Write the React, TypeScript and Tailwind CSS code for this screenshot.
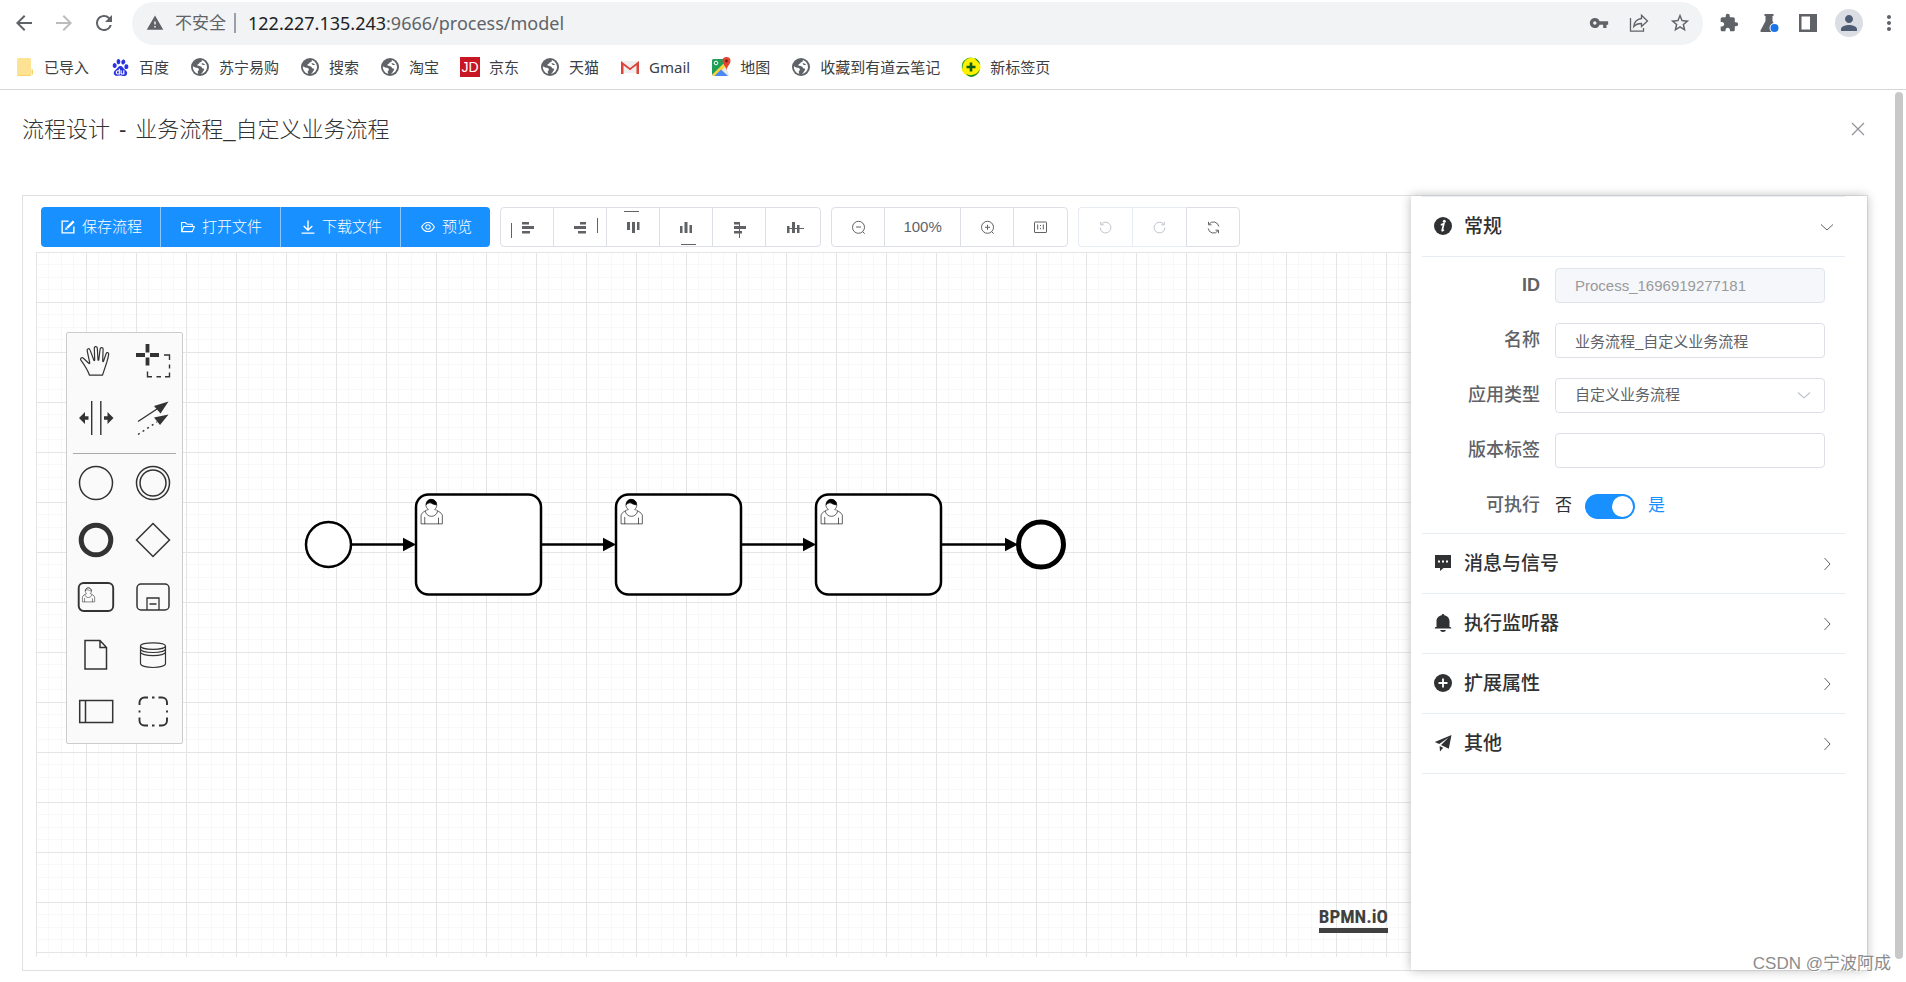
import React from 'react';
import {
  MdArrowBack,
  MdArrowForward,
  MdExtension,
  MdMoreVert,
  MdPerson,
  MdRefresh,
  MdStarBorder,
  MdVpnKey,
  MdWarning,
} from 'react-icons/md';
import { SiBaidu } from 'react-icons/si';
import { AiOutlineEye, AiOutlineFolderOpen } from 'react-icons/ai';

/* ---------- Browser chrome ---------- */

const Globe = () => (
  <svg viewBox="0 0 18 18" className="size-[18px]">
    <circle cx="9" cy="9" r="9" fill="#5f6368" />
    <path
      d="M10.8 1.9c.3 1.3-.2 2-1.6 2.300-.9.2-.7 1.300-1.500 1.600-1 .3-1.500.9-1.200 1.700.4.900 3.500.2 4.100 1.700.3.900 1 1.200 1.900 1.200.8 0 .9 1.500 0 2.300-.8.700-1.100 2.600-2.700 3.300 3.200-.5 6.200-3.400 6.200-7 0-3.200-2.100-6.100-5.200-7.100z"
      fill="#fff"
    />
    <path
      d="M1.900 8.200c1.300.5 2.600 1.500 4 1.600 1.300.2 2.100.9 2 1.900-.1 1-1.200 1-1.200 2 0 .8.600 1.100.500 2.100-3-.6-5.500-3.500-5.300-7.600z"
      fill="#fff"
    />
    <path d="M10.500 5.400c1.300-.3 2.500.2 3.500 1.400-1.300.5-2.800.2-3.500-1.400z" fill="#5f6368" />
  </svg>
);

const Folder = () => (
  <svg viewBox="0 0 20 20" className="size-5">
    <rect x="2" y="1" width="14" height="18" rx="1.500" fill="#fde293" />
    <path d="M3.500 19h11a1.500 1.500 0 0 0 1.500-1.500h2V13l-1.500-1.500V17a1 1 0 0 1-1 1H2.500z" fill="#f6d365" />
  </svg>
);

const JdLogo = () => (
  <span className="flex size-5 items-center justify-center bg-[#c81623] text-[14px] leading-5 text-white">
    JD
  </span>
);

const GmailLogo = () => (
  <svg viewBox="0 0 20 20" className="size-5">
    <path d="M1 4h18v12H1z" fill="#efefef" />
    <path d="M1 17V4l9 7 9-7v13h-2.500V8.200L10 13.300 3.500 8.200V17z" fill="#db4437" />
  </svg>
);

const MapsLogo = () => (
  <svg viewBox="0 0 20 20" className="size-5">
    <path d="M1 3.500A1.500 1.500 0 0 1 2.500 2H13l5 16.500-1 .5H2.500A1.500 1.500 0 0 1 1 17.500z" fill="#e8e8e8" />
    <path d="M1 3.500A1.500 1.500 0 0 1 2.500 2H12l1 5L1 18z" fill="#1e9e57" />
    <path d="M1 18 13 6l2 3L5 19H2z" fill="#fbd23b" />
    <path d="M3.500 19 10 12.500 17 19z" fill="#4a89f3" />
    <circle cx="5" cy="6" r="1.800" fill="none" stroke="#fff" />
    <path d="M15.500 0A4 4 0 0 0 11.500 4c0 3 3 4.500 4 9 1-4.500 4-6 4-9a4 4 0 0 0-4-4z" fill="#e14335" />
    <circle cx="15.500" cy="4" r="1.400" fill="#7a1c14" />
  </svg>
);

const SafeLogo = () => (
  <svg viewBox="0 0 20 20" className="size-5">
    <circle cx="10" cy="10" r="9.600" fill="#fff000" />
    <path d="M3 14A9 9 0 0 1 13 1 9.800 9.800 0 0 0 1 7a9.500 9.500 0 0 0 2 7z" fill="#2faa3a" />
    <path d="M5 17c5 2.500 11 1 14-5a9.800 9.800 0 0 1-9 8 9 9 0 0 1-5-3z" fill="#128a2a" />
    <path d="M13 .8A9.800 9.800 0 0 1 19.500 8L18 6z" fill="#128a2a" />
    <path d="M10 5.500v9M5.500 10h9" stroke="#0b5d12" strokeWidth="2.600" />
  </svg>
);

const bookmarks: { label: string; icon: React.ReactNode }[] = [
  { label: '已导入', icon: <Folder /> },
  { label: '百度', icon: <SiBaidu className="size-[17px] text-[#2932e1]" /> },
  { label: '苏宁易购', icon: <Globe /> },
  { label: '搜索', icon: <Globe /> },
  { label: '淘宝', icon: <Globe /> },
  { label: '京东', icon: <JdLogo /> },
  { label: '天猫', icon: <Globe /> },
  { label: 'Gmail', icon: <GmailLogo /> },
  { label: '地图', icon: <MapsLogo /> },
  { label: '收藏到有道云笔记', icon: <Globe /> },
  { label: '新标签页', icon: <SafeLogo /> },
];

function BrowserBar() {
  return (
    <header className="border-b border-[#d5d6d8] bg-white font-['Noto_Sans','Noto_Sans_CJK_SC',sans-serif] text-[#5f6368]">
      <div className="flex items-center pt-0.5 pr-[5px] pl-3">
        <nav className="flex items-center gap-4 pb-0.5" aria-label="导航">
          <button aria-label="后退"><MdArrowBack className="size-6" /></button>
          <button aria-label="前进" className="text-[#babcbe]"><MdArrowForward className="size-6" /></button>
          <button aria-label="刷新"><MdRefresh className="size-6" /></button>
        </nav>
        <div className="ml-4 flex h-[43px] flex-1 items-center rounded-full bg-[#f1f3f4] px-3 pb-0.5 pl-3.5">
          <MdWarning className="size-[18px]" />
          <span className="ml-[11px] text-[17px] leading-6">不安全</span>
          <span className="mr-3 ml-2 h-5 w-0.5 bg-[#9aa0a6]" />
          <span className="flex-1 text-[18px] leading-6">
            <span className="text-[#202124]">122.227.135.243</span>:9666/process/model
          </span>
          <div className="flex items-center gap-5">
            <button aria-label="密码"><MdVpnKey className="size-5" /></button>
            <button aria-label="分享">
              <svg viewBox="0 0 20 20" className="size-5" fill="none" stroke="currentColor" strokeWidth="1.300">
                <path d="M1.500 5v13.200h13V15" />
                <path d="M12.500 2.200 18.500 8l-6 5.500V10.500c-3.500 0-6 1-7.800 3.200.4-4 2.800-7.600 7.800-8.200z" />
              </svg>
            </button>
            <button aria-label="收藏"><MdStarBorder className="size-[22px]" /></button>
          </div>
        </div>
        <div className="ml-4 flex items-center gap-5 pb-0.5">
          <button aria-label="扩展程序"><MdExtension className="size-5" /></button>
          <button aria-label="实验">
            <svg viewBox="0 0 20 20" className="size-5">
              <path d="M5.500 1h9v2h-1v5l5 9.500c.4.900-.2 1.500-1 1.500H2.500c-.9 0-1.400-.8-1-1.600L6.500 8V3h-1z" fill="#5f6368" />
              <circle cx="15.500" cy="15" r="5" fill="#fff" />
              <circle cx="15.500" cy="15" r="4" fill="#1a73e8" />
            </svg>
          </button>
          <button aria-label="侧边栏">
            <svg viewBox="0 0 18 18" className="size-[18px]">
              <path d="M0 0h18v18H0zM2.500 2.500v13H11v-13z" fill="#5f6368" fillRule="evenodd" />
            </svg>
          </button>
          <button aria-label="个人资料" className="-ml-0.5 flex size-7 items-center justify-center rounded-full bg-[#dadde3]">
            <MdPerson className="size-6 text-[#4d5b73]" />
          </button>
        </div>
        <button aria-label="更多" className="ml-3.5 pb-0.5"><MdMoreVert className="size-6" /></button>
      </div>
      <nav className="flex h-11 items-center gap-[21px] pl-[15px] text-[#3c4043]" aria-label="书签">
        {bookmarks.map((b) => (
          <a key={b.label} href="#" className="flex items-center gap-[9px] text-[15px] leading-5">
            <span className="flex size-5 items-center justify-center font-['Liberation_Sans',sans-serif]">{b.icon}</span>
            {b.label}
          </a>
        ))}
      </nav>
    </header>
  );
}

/* ---------- Toolbar ---------- */

const primaryActions: { label: string; icon: React.ReactNode }[] = [
  {
    label: '保存流程',
    icon: (
      <svg viewBox="0 0 15 15" className="size-4" fill="none" stroke="currentColor" strokeWidth="1.300">
        <path d="M8 2H2v11h11V7" />
        <path d="m12.800 2.200-6 6" strokeWidth="2.200" />
        <path d="m5.500 7.500-.8 2.800 2.800-.8z" fill="currentColor" stroke="none" />
      </svg>
    ),
  },
  { label: '打开文件', icon: <AiOutlineFolderOpen className="size-4" /> },
  {
    label: '下载文件',
    icon: (
      <svg viewBox="0 0 15 15" className="size-4" fill="none" stroke="currentColor" strokeWidth="1.300">
        <path d="M7.500 1.500v8.500M3.500 6.500l4 4 4-4M1.500 13.200h12" />
      </svg>
    ),
  },
  { label: '预览', icon: <AiOutlineEye className="size-4" /> },
];

const alignIcons: { label: string; shape: string }[] = [
  { label: '向左对齐', shape: 'M21 14h7v2.500h-7zM21 18h12v3h-12zM21 23h8v2.500h-8zM10 15h1v15h-1z' },
  { label: '向右对齐', shape: 'M26 14h6v2.500h-6zM20 18h12v3h-12zM24 23h8v2.500h-8zM43 10h1v15h-1z' },
  { label: '向上对齐', shape: 'M20 14h3v8h-3zM25 14h3v11h-3zM30 14h2.500v8h-2.500zM17 3h15v1h-15z' },
  { label: '向下对齐', shape: 'M20 18h2.500v7h-2.500zM24.500 14h3v11h-3zM29.500 17h2.500v8h-2.500zM21 36h15v1h-15z' },
  { label: '水平居中', shape: 'M21 14h6v2.500h-6zM21 18h12v3h-12zM21 23h8v2.500h-8zM26 15h1v15h-1z' },
  { label: '垂直居中', shape: 'M20 18h2.500v7h-2.500zM25 14h3v11h-3zM30 17h2.500v8h-2.500zM22 20h15v1h-15z' },
];

const lineIcon = 'size-[15px] fill-none stroke-current';

function Toolbar() {
  const cell =
    'flex w-[53px] items-center justify-center border-r border-[#dcdfe6] last:w-[54px] last:border-r-0';
  return (
    <div className="ml-[5px] flex h-10 gap-2.5 text-[15px] text-[#606266]">
      <div className="flex overflow-hidden rounded-[4px] bg-[#1890ff] text-white">
        {primaryActions.map((a) => (
          <button
            key={a.label}
            className="flex items-center gap-1.5 border-r border-[#8cc8ff] pr-[18px] pl-[19px] font-light last:border-r-0"
          >
            {a.icon}
            <span>{a.label}</span>
          </button>
        ))}
      </div>
      <div className="flex rounded-[4px] border border-[#dcdfe6]">
        {alignIcons.map((a) => (
          <button key={a.label} aria-label={a.label} className={cell}>
            <svg viewBox="0 0 52 38" className="h-[38px] w-[52px] shrink-0" fill="currentColor">
              <path d={a.shape} />
            </svg>
          </button>
        ))}
      </div>
      <div className="flex rounded-[4px] border border-[#dcdfe6]">
        <button aria-label="缩小视图" className={cell}>
          <svg viewBox="0 0 15 15" className={lineIcon}>
            <circle cx="7.500" cy="7.300" r="6" />
            <path d="M5 7h5M11.700 11.700l2 2" />
          </svg>
        </button>
        <button className="flex w-[76px] items-center justify-center border-r border-[#dcdfe6]">100%</button>
        <button aria-label="放大视图" className={cell}>
          <svg viewBox="0 0 15 15" className={lineIcon}>
            <circle cx="7.500" cy="7.300" r="6" />
            <path d="M5 7.300h5M7.500 4.800v5M11.700 11.700l2 2" />
          </svg>
        </button>
        <button aria-label="重置视图" className="flex w-[53px] items-center justify-center">
          <svg viewBox="0 0 15 15" className={lineIcon}>
            <rect x="1.500" y="2" width="12" height="10.500" rx=".5" />
            <path d="M4.700 4.500v5M10.300 4.500v5M7.500 5v1.200M7.500 8v1.200" />
          </svg>
        </button>
      </div>
      <div className="flex">
        <button
          aria-label="撤销"
          disabled
          className="flex w-[54px] items-center justify-center rounded-l-[4px] border border-r-0 border-[#e6ebf5] text-[#c0c4cc]"
        >
          <svg viewBox="0 0 15 15" className={lineIcon}>
            <path d="M3.200 4.300A5.400 5.400 0 1 1 2.100 7.600M2.700 1.800v3h3" />
          </svg>
        </button>
        <button
          aria-label="恢复"
          disabled
          className="flex w-[54px] items-center justify-center border border-r-0 border-[#e6ebf5] text-[#c0c4cc]"
        >
          <svg viewBox="0 0 15 15" className={lineIcon}>
            <path d="M11.800 4.300A5.400 5.400 0 1 0 12.900 7.600M12.300 1.800v3h-3" />
          </svg>
        </button>
        <button
          aria-label="重新绘制"
          className="flex w-[54px] items-center justify-center rounded-r-[4px] border border-[#dcdfe6]"
        >
          <svg viewBox="0 0 15 15" className={lineIcon}>
            <path d="M3 4.300a5.400 5.400 0 0 1 9.800 2.200M12 10.700A5.400 5.400 0 0 1 2.200 8.500" />
            <path d="M2.500 1.800v3h3M12.500 13.200v-3h-3" />
          </svg>
        </button>
      </div>
    </div>
  );
}

/* ---------- Palette ---------- */

const person =
  'm15,12 c 0.909,-0.845 1.594,-2.049 1.594,-3.385 0,-2.554 -1.805,-4.622 -4.357,-4.622 -2.552,0 -4.288,2.068 -4.288,4.622 0,1.348 0.974,2.562 1.896,3.405 -0.529,0.187 -5.669,2.097 -5.794,4.756 v 6.718 h 17 v -6.718 c 0,-2.298 -5.528,-4.595 -6.051,-4.776 zm -8,6 l 0,5.5 m 11,0 l 0,-5';
const collar = 'm15,12 m 2.162,1.009 c 0,2.447 -2.158,4.431 -4.821,4.431 -2.665,0 -4.822,-1.981 -4.822,-4.431';
const hair =
  'm15,12 m -6.9,-3.80 c 0,0 2.251,-2.358 4.274,-1.177 2.024,1.181 4.221,1.537 4.124,0.965 -0.098,-0.57 -0.117,-3.791 -4.191,-4.136 -3.572,-0.348 -4.207,3.808 -4.207,4.348 z';

const toolEntries: { label: string; art: React.ReactNode }[] = [
  {
    label: '激活抓手工具',
    art: (
      <path
        d="M13.500 33.200h13l4.300-13c.7-2.300 1.700-6 1.900-8.100.1-1.700-2-2-2.600-.4l-2.600 7.600c-.2.500-.8.400-.8-.2l.4-12c0-2-2.700-2.100-3 0l-1.300 10.700c-.1.600-.7.600-.8 0L21.300 6c-.3-2-3-1.900-3 .1l.4 12c0 .6-.6.700-.8.100L14 7.900c-.7-2-3.300-1.300-2.800.9l2.500 11.800c.2.900-.4 1.200-1 .6l-5.300-5c-1.500-1.500-3.700.3-2.500 2 2.900 4 6.400 9 8.600 15z"
        strokeWidth="1.200"
      />
    ),
  },
  {
    label: '激活框选工具',
    art: (
      <>
        <path d="M3 13h9M17 13h9M14.500 2v8.500M14.500 15.500v8" strokeWidth="3.800" />
        <path d="M31 13h5.500v5M36.500 22.500v4M36.500 30.500v4.200H32M28 34.700h-4.500M19 34.700h-4.500V29.500" strokeWidth="1.400" />
      </>
    ),
  },
  {
    label: '激活空间工具',
    art: (
      <>
        <path d="M15.700 2v34M24.800 2v34" strokeWidth="1.400" />
        <path d="M3 19l6-6v4.200h3.500v3.600H9V25zM37.500 19l-6-6v4.200H28v3.600h3.500V25z" fill="currentColor" stroke="none" />
      </>
    ),
  },
  {
    label: '激活全局连接工具',
    art: (
      <>
        <path d="M5 22.500 24 10" strokeWidth="1.400" />
        <path d="M5 35.500 24 23" strokeWidth="1.400" strokeDasharray="2 3.500" />
        <path d="M35.500 2.500 21 7l6.500 7.500zM35.500 15.500 21 18.500l6 7.500z" fill="currentColor" stroke="none" />
      </>
    ),
  },
];

const shapeEntries: { label: string; art: React.ReactNode }[] = [
  { label: '创建开始事件', art: <circle cx="20" cy="20" r="16.500" strokeWidth="1.500" /> },
  {
    label: '创建中间事件',
    art: (
      <>
        <circle cx="20" cy="20" r="16.500" strokeWidth="1.500" />
        <circle cx="20" cy="20" r="13" strokeWidth="1.500" />
      </>
    ),
  },
  { label: '创建结束事件', art: <circle cx="20" cy="20" r="14.800" strokeWidth="5" /> },
  { label: '创建网关', art: <path d="M20 3.500 36.500 20 20 36.500 3.500 20z" strokeWidth="1.500" /> },
  {
    label: '创建用户任务',
    art: (
      <>
        <rect x="2.700" y="6" width="34.500" height="28" rx="5" strokeWidth="1.900" />
        <g transform="translate(3.500 8) scale(.72)" strokeWidth=".8">
          <path d={person} />
          <path d={collar} />
          <path d={hair} />
        </g>
      </>
    ),
  },
  {
    label: '创建子流程',
    art: (
      <>
        <rect x="4" y="7" width="32" height="26" rx="4" strokeWidth="1.500" />
        <path d="M14 33V21h12v12M16.500 27h7" strokeWidth="1.300" />
      </>
    ),
  },
  { label: '创建数据对象', art: <path d="M9 6.500h15l6.500 7v21.500H9zM24 6.500v7h6.500" strokeWidth="1.500" /> },
  {
    label: '创建数据存储',
    art: (
      <path
        d="M7.500 12v17.500c0 2.300 5.600 4 12.500 4s12.500-1.700 12.500-4V12c0-2-5.600-3.200-12.500-3.200S7.500 10 7.500 12c0 2 5.600 3.400 12.500 3.400S32.500 14 32.500 12M7.500 15c0 2 5.600 3.500 12.500 3.500s12.500-1.500 12.500-3.500M7.500 18c0 2 5.600 3.700 12.500 3.700s12.500-1.700 12.500-3.700"
        strokeWidth="1.200"
      />
    ),
  },
  { label: '创建池', art: <path d="M3.700 9.500h33v22h-33zM9.500 9.500v22" strokeWidth="1.500" /> },
  {
    label: '创建分组',
    art: (
      <path
        d="M6.500 14v-2.500a5 5 0 0 1 5-5H15M19 6.500h2.500M25.500 6.500h3.500a5 5 0 0 1 5 5V14M34 19.500v2M34 26.500v3a5 5 0 0 1-5 5h-3M21.500 34.500H19M15 34.500h-3.500a5 5 0 0 1-5-5v-3M6.500 21.500v-2"
        strokeWidth="1.900"
      />
    ),
  },
];

function Palette() {
  const entry = (e: { label: string; art: React.ReactNode }) => (
    <button key={e.label} aria-label={e.label} className="flex h-[57px] items-center justify-center">
      <svg viewBox="0 0 40 40" className="size-10" fill="none" stroke="currentColor">
        {e.art}
      </svg>
    </button>
  );
  return (
    <div className="absolute top-20 left-[30px] w-[117px] rounded-[2px] border border-[#cccccc] bg-[#fafafa] pb-1 text-[#333333]">
      <div className="grid grid-cols-2">{toolEntries.map(entry)}</div>
      <hr className="mx-1.5 mt-1.5 border-t border-[#aaaaaa]" />
      <div className="grid grid-cols-2">{shapeEntries.map(entry)}</div>
    </div>
  );
}

/* ---------- Diagram ---------- */

const tasks = [380, 580, 780];
const flows = [
  [315, 380],
  [505, 580],
  [705, 780],
  [905, 982],
];

function Canvas() {
  return (
    <div className="relative mt-[5px] flex-1">
      <svg className="absolute inset-0 h-full w-full">
        <defs>
          <pattern id="grid" width="50" height="50" patternUnits="userSpaceOnUse">
            <path d="M12 0h1v50h-1zM25 0h1v50h-1zM37 0h1v50h-1zM0 12h50v1h-50zM0 25h50v1h-50zM0 37h50v1h-50z" fill="#f8f8f8" />
            <path d="M0 0h50v1h-50zM0 0h1v50h-1z" fill="#e5e5e5" />
          </pattern>
        </defs>
        <rect width="100%" height="100%" fill="url(#grid)" />
        <g stroke="#000" strokeWidth="2.500" fill="#fff">
          {flows.map(([from, to]) => (
            <g key={from}>
              <path d={`M${from} 292.500H${to - 4}`} />
              <path d={`M${to} 292.500l-13 -6.800v13.600z`} fill="#000" stroke="none" />
            </g>
          ))}
          <circle cx="292.500" cy="292.500" r="22.500" />
          <circle cx="1005" cy="292.500" r="22.500" strokeWidth="5" />
          {tasks.map((x) => (
            <g key={x} transform={`translate(${x} 242.500)`}>
              <rect width="125" height="100" rx="12.500" />
              <g transform="scale(1.25)" strokeWidth=".5">
                <path d={person} />
                <path d={collar} />
                <path d={hair} fill="#000" />
              </g>
            </g>
          ))}
        </g>
      </svg>
      <Palette />
      <a
        href="#"
        className="absolute right-[23px] bottom-6 border-b-[5px] border-[#404040] font-['Liberation_Sans_Narrow','Roboto_Condensed','Liberation_Sans',sans-serif] text-[19px] leading-[22px] font-bold text-[#404040]"
      >
        BPMN.iO
      </a>
    </div>
  );
}

/* ---------- Property panel ---------- */

const InfoIcon = () => (
  <svg viewBox="0 0 18 18" className="size-[18px]">
    <circle cx="9" cy="9" r="9" fill="currentColor" />
    <circle cx="10.300" cy="4.300" r="1.500" fill="#fff" />
    <path d="M6.800 7.800c1.200-.2 2-.5 3-.9L8.200 13.200c-.2.900.5.600 1.600-.5" fill="none" stroke="#fff" strokeWidth="1.700" />
  </svg>
);

const sections: { label: string; icon: React.ReactNode }[] = [
  {
    label: '消息与信号',
    icon: (
      <svg viewBox="0 0 18 18" className="size-[18px]" fill="currentColor">
        <path
          fillRule="evenodd"
          d="M1 1h16v13H9.500L6 17v-3H1zM4 6.500v2h2v-2zM8 6.500v2h2v-2zM12 6.500v2h2v-2z"
        />
      </svg>
    ),
  },
  {
    label: '执行监听器',
    icon: (
      <svg viewBox="0 0 18 18" className="size-[18px]" fill="currentColor">
        <path d="M9 0c.8 0 1.200.5 1.200 1.200C13.200 1.800 15.500 4 15.500 7v6H16c.7 0 1.300.5 1.300 1.500H.7C.7 13.500 1.300 13 2 13h.5V7c0-3 2.300-5.200 5.300-5.800C7.800.5 8.200 0 9 0zM6 16h6c-.5 1.200-1.500 2-3 2s-2.500-.8-3-2z" />
      </svg>
    ),
  },
  {
    label: '扩展属性',
    icon: (
      <svg viewBox="0 0 18 18" className="size-[18px]">
        <circle cx="9" cy="9" r="9" fill="currentColor" />
        <path d="M9 4.500v9M4.500 9h9" stroke="#fff" strokeWidth="1.800" />
      </svg>
    ),
  },
  {
    label: '其他',
    icon: (
      <svg viewBox="0 0 18 18" className="size-[18px]" fill="currentColor">
        <path d="M17.500 1 .8 8l4.400 2L14.500 3.500 7 11l7.800 3.800zM5.600 12l3.600 1.700L6 17.500z" />
      </svg>
    ),
  },
];

function SectionHeader({ label, icon, open }: { label: string; icon: React.ReactNode; open?: boolean }) {
  return (
    <button
      aria-expanded={!!open}
      className="flex h-[60px] w-full items-center border-b border-[#e6ebf5] pr-[11px] pl-3 text-left text-[19px] font-medium text-[#303133]"
    >
      <span className="pb-0.5">{icon}</span>
      <span className="ml-3 flex-1 pt-0.5">{label}</span>
      <svg viewBox="0 0 14 14" className="size-3.5" fill="none" stroke="#606266" strokeWidth="1">
        <path d={open ? 'M1 4.500 7 10l6-5.500' : 'M4.500 1l5.500 6-5.500 6'} />
      </svg>
    </button>
  );
}

function Field({ id, label, children }: { id: string; label: React.ReactNode; children: React.ReactNode }) {
  return (
    <div className="flex h-[35px] items-center gap-[15px]">
      <label htmlFor={id} className="w-[118px] text-right text-[18px] font-medium text-[#606266]">
        {label}
      </label>
      {children}
    </div>
  );
}

function PropertyPanel() {
  const box = 'h-[35px] w-full min-w-0 flex-1 rounded-[4px] border border-[#dcdfe6] bg-white px-[19px] text-[15px] text-[#606266]';
  return (
    <aside className="relative w-[456px] shrink-0 bg-white pr-[22px] pl-[11px] shadow-[0_0_10px_#bbbbbb]">
      <div className="border-t border-[#e6ebf5]">
        <SectionHeader label="常规" icon={<InfoIcon />} open />
        <div className="flex flex-col gap-5 border-b border-[#e6ebf5] pt-[11px] pr-5 pb-[10px]">
          <Field id="process-id" label={<b>ID</b>}>
            <input id="process-id" disabled defaultValue="Process_1696919277181" className="h-[35px] w-full min-w-0 flex-1 rounded-[4px] border border-[#dfe4ed] bg-[#f5f7fa] px-[19px] text-[15px] text-[#9a9a9a]" />
          </Field>
          <Field id="process-name" label="名称">
            <input id="process-name" defaultValue="业务流程_自定义业务流程" className={box} />
          </Field>
          <Field id="process-type" label="应用类型">
            <div className="relative flex flex-1">
              <select id="process-type" className={`${box} appearance-none`}>
                <option>自定义业务流程</option>
              </select>
              <svg viewBox="0 0 14 14" className="pointer-events-none absolute top-2.5 right-3.5 size-3.5" fill="none" stroke="#c0c4cc" strokeWidth="1.200">
                <path d="M1 4.500 7 10l6-5.500" />
              </svg>
            </div>
          </Field>
          <Field id="process-version" label="版本标签">
            <input id="process-version" className={box} />
          </Field>
          <Field id="process-executable" label="可执行">
            <div className="flex items-center pt-px text-[17px] text-[#303133]">
              <span>否</span>
              <span className="relative mx-[13px] flex">
                <input
                  id="process-executable"
                  type="checkbox"
                  role="switch"
                  defaultChecked
                  className="peer h-[25px] w-[50px] appearance-none rounded-full bg-[#dcdfe6] checked:bg-[#1890ff]"
                />
                <span className="pointer-events-none absolute top-0.5 left-0.5 size-[21px] rounded-full bg-white peer-checked:left-[27px]" />
              </span>
              <span className="text-[#1890ff]">是</span>
            </div>
          </Field>
        </div>
        {sections.map((s) => (
          <SectionHeader key={s.label} label={s.label} icon={s.icon} />
        ))}
      </div>
    </aside>
  );
}

export default function App() {
  return (
    <div className="relative flex min-h-screen flex-col bg-white font-['Liberation_Sans','Noto_Sans_CJK_SC',sans-serif]">
      <BrowserBar />
      <main className="relative flex flex-1 flex-col pr-[38px] pb-[11px] pl-[22px]">
        <div className="flex h-[105px] items-start justify-between pt-6 pr-[3px]">
          <h1 className="flex gap-[9px] text-[22px] leading-8 font-light text-[#303133]">
            <span>流程设计</span>
            <span>-</span>
            <span>业务流程_自定义业务流程</span>
          </h1>
          <button aria-label="关闭" className="mt-2 text-[#909399]">
            <svg viewBox="0 0 14 14" className="size-3.5" fill="none" stroke="currentColor" strokeWidth="1.200">
              <path d="m1 1 12 12M13 1 1 13" />
            </svg>
          </button>
        </div>
        <section className="flex flex-1 border border-[#e0e0e0]">
          <div className="flex min-w-0 flex-1 flex-col pt-[11px] pb-[13px] pl-[13px]">
            <Toolbar />
            <Canvas />
          </div>
          <PropertyPanel />
        </section>
        <div className="absolute top-0.5 right-[3px] bottom-[23px] w-2 rounded-full bg-[#c8c8c8]" />
        <p className="absolute right-[15px] bottom-1 text-[17px] leading-7 text-[#8c8c8c] [text-shadow:1px_1px_0_#ffffff]">
          CSDN @宁波阿成
        </p>
      </main>
    </div>
  );
}
